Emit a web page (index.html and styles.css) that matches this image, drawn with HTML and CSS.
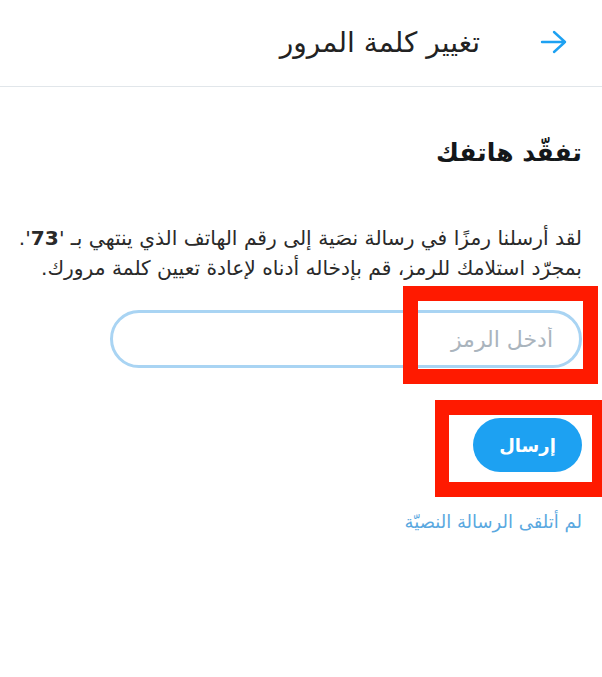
FILE: index.html
```html
<!DOCTYPE html>
<html lang="ar" dir="rtl">
<head>
    <meta charset="UTF-8">
    <meta name="viewport" content="width=device-width, initial-scale=1.0">
    <title>تغيير كلمة المرور</title>
    <link rel="stylesheet" href="styles.css">
</head>
<body>
    <header class="topbar">
        <span class="back">
            <svg width="28" height="24" viewBox="0 0 28 24">
                <path d="M2 12 H25 M14 2 L25 12 L14 22" fill="none" stroke="#1da1f2" stroke-width="2.4" stroke-linecap="round" stroke-linejoin="round"/>
            </svg>
        </span>
        <h1 class="title">تغيير كلمة المرور</h1>
    </header>

    <main class="content">
        <h2 class="heading">تفقّد هاتفك</h2>
        <p class="info">لقد أرسلنا رمزًا في رسالة نصَية إلى رقم الهاتف الذي ينتهي بـ '<b>73</b>'.<br>بمجرّد استلامك للرمز، قم بإدخاله أدناه لإعادة تعيين كلمة مرورك.</p>

        <input class="code" type="text" placeholder="أدخل الرمز">

        <button class="send">إرسال</button>

        <a class="resend" href="#">لم أتلقى الرسالة النصيّة</a>
    </main>

    <div class="mark mark-input"></div>
    <div class="mark mark-button"></div>
</body>
</html>
```

FILE: styles.css
```css
body {
    margin: 0;
    font-family: "DejaVu Sans", "Noto Sans", sans-serif;
    background: #ffffff;
    color: #14171a;
    position: relative;
    min-height: 677px;
}

.topbar {
    height: 84px;
    display: flex;
    align-items: center;
    padding-right: 34px;
    padding-bottom: 2px;
    border-bottom: 1px solid #e1e6ea;
}

.back {
    display: flex;
    width: 28px;
}

.title {
    margin: 0 60px 0 0;
    font-size: 28px;
    font-weight: normal;
    color: #222;
}

.content {
    display: flex;
    flex-direction: column;
    align-items: flex-start;
    padding: 0 20px;
}

.heading {
    margin: 46px 0 0;
    font-size: 25px;
    line-height: 40px;
    font-weight: bold;
}

.info {
    margin: 50px 0 0;
    font-size: 20.2px;
    line-height: 30px;
    color: #2a2a2a;
    white-space: nowrap;
}

.code {
    margin-top: 27px;
    width: 472px;
    height: 58px;
    box-sizing: border-box;
    border: 3px solid #a9d4f3;
    border-radius: 29px;
    padding: 0 26px;
    font-family: inherit;
    font-size: 22px;
    outline: none;
}

.code::placeholder {
    color: #aab4bd;
}

.send {
    margin-top: 50px;
    width: 109px;
    height: 54px;
    border: none;
    border-radius: 27px;
    background: #1da1f2;
    color: #fff;
    font-family: inherit;
    font-size: 18px;
    font-weight: bold;
}

.resend {
    margin-top: 38px;
    font-size: 18px;
    line-height: 24px;
    color: #5aa8e0;
    text-decoration: none;
}

.mark {
    position: absolute;
    border: 15px solid #ff1a00;
    box-sizing: border-box;
}

.mark-input {
    left: 403px;
    top: 286px;
    width: 195px;
    height: 98px;
}

.mark-button {
    left: 435px;
    top: 400px;
    width: 167px;
    height: 97px;
    border-width: 15px 10px 15px 14px;
}
```
